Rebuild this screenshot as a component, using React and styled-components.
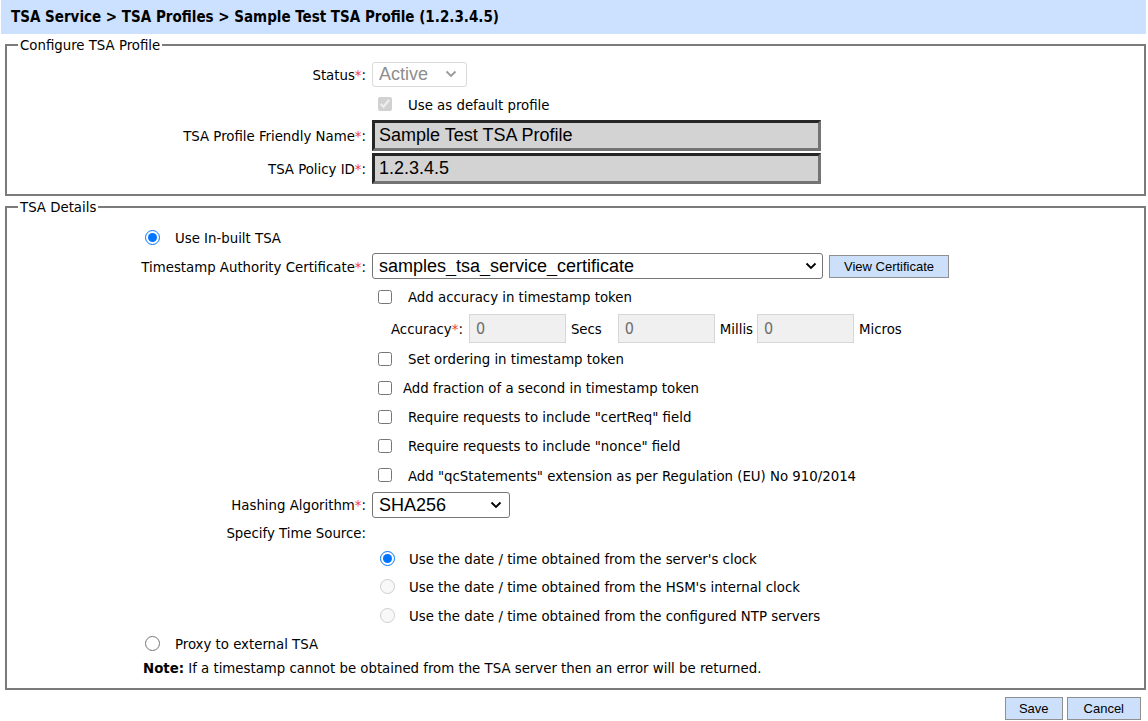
import React from 'react'
import styled, { createGlobalStyle } from 'styled-components'

const GlobalStyle = createGlobalStyle`
  html, body {
    margin: 0;
    padding: 0;
    background: #fff;
  }
  body {
    font-family: "DejaVu Sans Condensed", "DejaVu Sans", Tahoma, sans-serif;
    font-size: 14.8px;
    color: #000;
  }
`

const Page = styled.div`
  width: 1148px;
  height: 721px;
  overflow: hidden;
`

const Crumbs = styled.div`
  height: 34px;
  margin: 0 2px 0 1px;
  padding-left: 10px;
  display: flex;
  align-items: center;
  background: #cce0ff;
  font-weight: bold;
  font-size: 15px;
`

const Fieldset = styled.fieldset`
  margin: ${props => props.$top}px 2px 0 5px;
  padding: ${props => props.$pt}px 0 ${props => props.$pb}px 0;
  border: 2px solid #7b7b7b;
  min-width: 0;
`

const Legend = styled.legend`
  margin-left: 11px;
  padding: 0 2px;
  font-size: 14.8px;
  line-height: 17px;
`

const Row = styled.div`
  display: flex;
  align-items: center;
  height: ${props => props.$h}px;
  padding-left: ${props => props.$indent || 0}px;
`

const LabelCell = styled.div`
  width: 359px;
  margin-right: 6px;
  text-align: right;
  flex-shrink: 0;
`

const Req = styled.span`
  color: #f23a3a;
`

const Cell = styled.div`
  display: flex;
  align-items: center;
  padding-left: ${props => props.$indent || 0}px;
`

const SelectWrap = styled.div`
  position: relative;
  display: inline-flex;
  color: ${props => (props.$dim ? '#9a9a9a' : '#000')};
`

const Select = styled.select`
  appearance: none;
  -webkit-appearance: none;
  width: ${props => props.$w}px;
  height: ${props => props.$h}px;
  padding: 0 0 0 6px;
  border: 1px solid #767676;
  border-radius: 3px;
  background: #fff;
  color: #000;
  font-family: "Liberation Sans", Arial, sans-serif;
  font-size: 18px;

  &:disabled {
    color: #8e8e8e;
    border-color: #dadada;
    opacity: 1;
  }
`

const Chevron = styled.svg`
  position: absolute;
  right: ${props => props.$right}px;
  top: 50%;
  margin-top: -4px;
  pointer-events: none;
`

const TextInput = styled.input`
  box-sizing: border-box;
  width: 449px;
  height: 31px;
  padding: 0 0 0 4px;
  border: 3px solid;
  border-color: #262626 #747474 #747474 #262626;
  background: #d3d3d3;
  color: #000;
  font-family: "Liberation Sans", Arial, sans-serif;
  font-size: 18px;
`

const SmallInput = styled.input`
  box-sizing: border-box;
  width: 97px;
  height: 29px;
  margin-left: ${props => props.$ml || 0}px;
  padding: 0 0 0 6px;
  border: 1px solid #d6d6d6;
  background: #f0f0f0;
  color: #6d6d6d;
  font-family: "DejaVu Sans Condensed", "DejaVu Sans", Tahoma, sans-serif;
  font-size: 16px;
`

const Unit = styled.span`
  margin: 0 ${props => props.$after}px 0 ${props => props.$before}px;
`

const Check = styled.input.attrs({ type: 'checkbox' })`
  width: 14px;
  height: 14px;
  margin: 0 ${props => props.$gap}px 0 6px;
`

const Radio = styled.input.attrs({ type: 'radio' })`
  width: 15px;
  height: 15px;
  margin: 0 ${props => props.$gap}px 0 ${props => props.$left || 0}px;
  accent-color: #0075ff;
`

const Button = styled.button`
  height: 23px;
  padding: 0 ${props => props.$px}px;
  border: 1px solid #8f8f8f;
  background: #cde0fb;
  color: #000;
  font-family: "Liberation Sans", Arial, sans-serif;
  font-size: 13px;
`

const ViewButton = styled(Button)`
  margin-left: 6px;
  width: 120px;
`

const Actions = styled.div`
  display: flex;
  justify-content: flex-end;
  gap: 4px;
  margin: 7px 7px 0 0;
`

const Note = styled.div`
  font-size: 14.8px;
`

const Down = ({ right }) => (
  <Chevron $right={right} width="12" height="8" viewBox="0 0 12 8">
    <path d="M1.5 1.5 L6 6 L10.5 1.5" fill="none" stroke="currentColor" strokeWidth="1.8" />
  </Chevron>
)

const CheckRow = ({ label, gap = 16, h = 29 }) => (
  <Row $h={h}>
    <LabelCell />
    <Cell>
      <Check $gap={gap} />
      <span>{label}</span>
    </Cell>
  </Row>
)

const TimeRow = ({ label, checked, disabled, h }) => (
  <Row $h={h}>
    <LabelCell />
    <Cell>
      <Radio name="ts" $left={8} $gap={14} defaultChecked={checked} disabled={disabled} />
      <span>{label}</span>
    </Cell>
  </Row>
)

export default function App() {
  return (
    <Page>
      <GlobalStyle />
      <Crumbs>TSA Service &gt; TSA Profiles &gt; Sample Test TSA Profile (1.2.3.4.5)</Crumbs>

      <Fieldset $top={2} $pt={5} $pb={9}>
        <Legend>Configure TSA Profile</Legend>
        <Row $h={32}>
          <LabelCell>Status<Req>*</Req>:</LabelCell>
          <SelectWrap $dim>
            <Select $w={95} $h={25} disabled defaultValue="Active">
              <option>Active</option>
            </Select>
            <Down right={10} />
          </SelectWrap>
        </Row>
        <Row $h={28}>
          <LabelCell />
          <Cell>
            <Check $gap={16} disabled defaultChecked />
            <span>Use as default profile</span>
          </Cell>
        </Row>
        <Row $h={34}>
          <LabelCell>TSA Profile Friendly Name<Req>*</Req>:</LabelCell>
          <TextInput defaultValue="Sample Test TSA Profile" readOnly />
        </Row>
        <Row $h={33}>
          <LabelCell>TSA Policy ID<Req>*</Req>:</LabelCell>
          <TextInput defaultValue="1.2.3.4.5" readOnly />
        </Row>
      </Fieldset>

      <Fieldset $top={2} $pt={8} $pb={10}>
        <Legend>TSA Details</Legend>
        <Row $h={28} $indent={138}>
          <Radio name="mode" $gap={15} defaultChecked />
          <span>Use In-built TSA</span>
        </Row>
        <Row $h={30}>
          <LabelCell>Timestamp Authority Certificate<Req>*</Req>:</LabelCell>
          <SelectWrap>
            <Select $w={451} $h={26} defaultValue="samples_tsa_service_certificate">
              <option>samples_tsa_service_certificate</option>
            </Select>
            <Down right={6} />
          </SelectWrap>
          <ViewButton $px={0}>View Certificate</ViewButton>
        </Row>
        <CheckRow label="Add accuracy in timestamp token" h={31} />
        <Row $h={32}>
          <LabelCell />
          <Cell $indent={19}>
            <span>Accuracy<Req>*</Req>:</span>
            <SmallInput $ml={6} defaultValue="0" disabled />
            <Unit $before={5} $after={16}>Secs</Unit>
            <SmallInput defaultValue="0" disabled />
            <Unit $before={5} $after={4}>Millis</Unit>
            <SmallInput defaultValue="0" disabled />
            <Unit $before={5} $after={0}>Micros</Unit>
          </Cell>
        </Row>
        <CheckRow label="Set ordering in timestamp token" />
        <CheckRow label="Add fraction of a second in timestamp token" gap={11} />
        <CheckRow label={'Require requests to include "certReq" field'} />
        <CheckRow label={'Require requests to include "nonce" field'} />
        <CheckRow label={'Add "qcStatements" extension as per Regulation (EU) No 910/2014'} h={30} />
        <Row $h={29}>
          <LabelCell>Hashing Algorithm<Req>*</Req>:</LabelCell>
          <SelectWrap>
            <Select $w={138} $h={26} defaultValue="SHA256">
              <option>SHA256</option>
            </Select>
            <Down right={8} />
          </SelectWrap>
        </Row>
        <Row $h={26}>
          <LabelCell>Specify Time Source:</LabelCell>
        </Row>
        <TimeRow h={27} checked label="Use the date / time obtained from the server's clock" />
        <TimeRow h={29} disabled label="Use the date / time obtained from the HSM's internal clock" />
        <TimeRow h={29} disabled label="Use the date / time obtained from the configured NTP servers" />
        <Row $h={26} $indent={138}>
          <Radio name="mode" $gap={15} />
          <span>Proxy to external TSA</span>
        </Row>
        <Row $h={22} $indent={136}>
          <Note><b>Note:</b> If a timestamp cannot be obtained from the TSA server then an error will be returned.</Note>
        </Row>
      </Fieldset>

      <Actions>
        <Button $px={13}>Save</Button>
        <Button $px={16}>Cancel</Button>
      </Actions>
    </Page>
  )
}
